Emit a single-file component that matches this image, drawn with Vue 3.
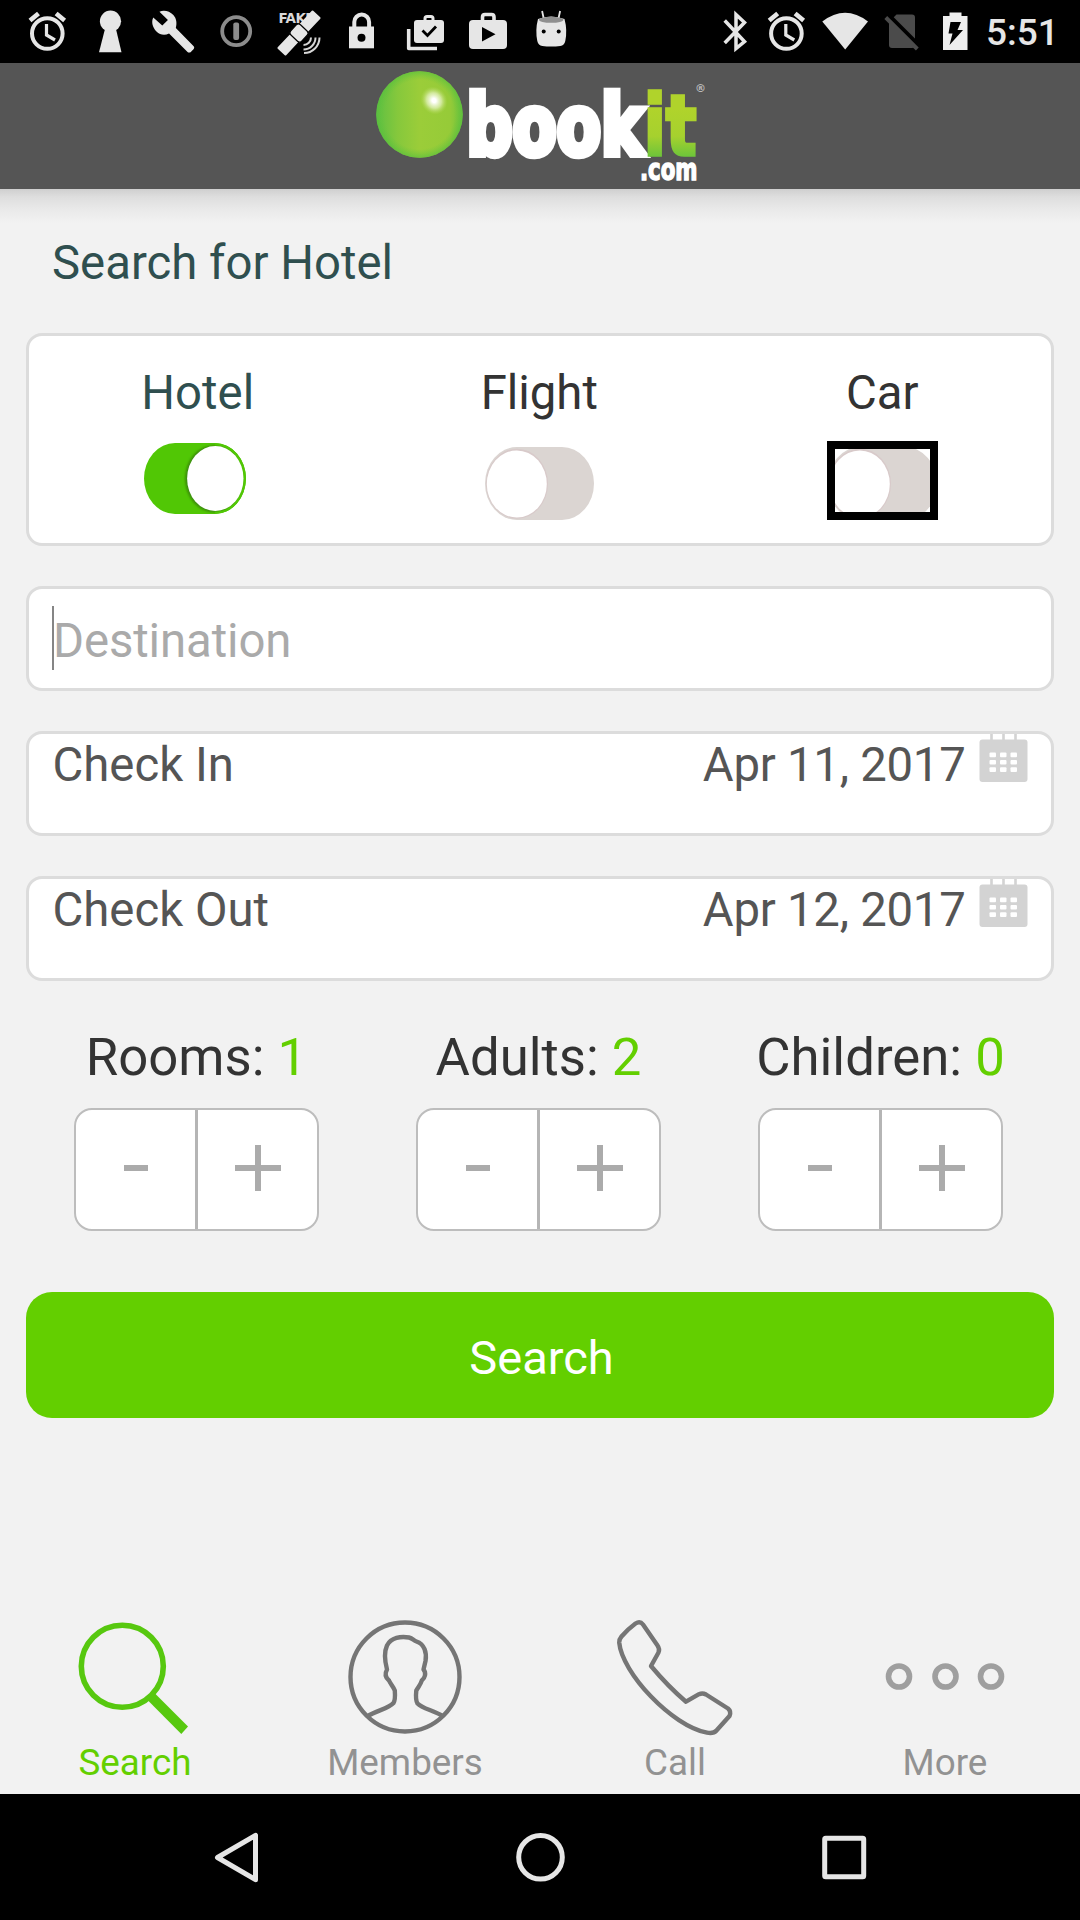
<script setup>
import { ref } from 'vue'

const modes = ref([
  { name: 'Hotel', on: true, focused: false },
  { name: 'Flight', on: false, focused: false },
  { name: 'Car', on: false, focused: true },
])
const dates = [
  { label: 'Check In', value: 'Apr 11, 2017' },
  { label: 'Check Out', value: 'Apr 12, 2017' },
]
const counters = ref([
  { label: 'Rooms', count: 1 },
  { label: 'Adults', count: 2 },
  { label: 'Children', count: 0 },
])
const holes = [0, 1, 2].flatMap((r) => [0, 1, 2].map((c) => ({ x: 10.5 + c * 10.5, y: 18.5 + r * 7.4 })))
</script>

<template>
  <div class="screen">
    <div class="status">
      <div class="status-left">
        <svg class="cell" viewBox="16 0 63 63">
          <g fill="none" stroke="#e6e6e6"><circle cx="47.3" cy="33.5" r="15.3" stroke-width="4" /><path d="M46.5 24v11l8.5 5" stroke-width="3.2" /><path d="M30 20.5l8.5-7M64.6 20.5l-8.5-7" stroke-width="4.6" /></g>
        </svg>
        <svg class="cell" viewBox="79 0 63 63"><g fill="#e6e6e6"><circle cx="110.5" cy="21.2" r="10.6" /><path d="M105.500 27h10l6 25.300h-22.500z" /></g></svg>
        <svg class="cell" viewBox="142 0 63 63"><path transform="translate(151 8.700) scale(1.880)" fill="#e6e6e6" d="M22.700 20l-9.500-9.800c.7-2.500.4-5-1.300-6.900-2-2-5-2.800-7.400-1.700L9 6 6 9 1.200 4.700C0 7.100.9 10.100 2.900 12.100c1.900 1.900 4.400 2.200 6.700 1.100l9.700 9.700c.6.6 1.400.6 2 0l1.300-1.300c.5-.5.5-1.100.1-1.600z" /></svg>
        <svg class="cell" viewBox="205 0 63 63"><circle cx="236.200" cy="31.200" r="14" fill="none" stroke="#8c8c8c" stroke-width="3.800" /><rect x="233.300" y="22.500" width="5.800" height="17.500" rx="2" fill="#8c8c8c" /></svg>
        <svg class="cell" viewBox="268 0 63 63">
          <text x="278.500" y="23" font-size="13.500" font-weight="700" fill="#d8d8d8" textLength="36" class="fake">FAKE</text>
          <g transform="translate(299 33) rotate(-47)" fill="#e6e6e6"><rect x="5" y="-5.800" width="21" height="11.600" rx="1" /><rect x="-26" y="-5.800" width="19" height="11.600" rx="1" /><rect x="-7" y="-7.500" width="14" height="15" rx="3" stroke="#000" stroke-width="1.200" /></g>
          <path d="M311 37.500a7.500 7.500 0 0 1-7.500 7.500M315.500 37.500a12 12 0 0 1-12 12M319.500 37.500a15.500 15.500 0 0 1-15.500 15.500" fill="none" stroke="#d6d6d6" stroke-width="2" />
        </svg>
        <svg class="cell" viewBox="331 0 63 63"><path d="M354.300 28v-6a7.400 7.400 0 0 1 14.800 0v6" fill="none" stroke="#e6e6e6" stroke-width="4" /><rect x="349" y="26.500" width="25" height="21.800" fill="#e6e6e6" /><circle cx="361.500" cy="37.700" r="4" fill="#000" /></svg>
        <svg class="cell" viewBox="394 0 63 63"><path d="M408.700 29v19.500H437" fill="none" stroke="#e6e6e6" stroke-width="3.600" stroke-linejoin="round" /><path d="M425 21v-2.500q0-2 2-2h4q2 0 2 2V21" fill="none" stroke="#e6e6e6" stroke-width="3" /><rect x="414" y="20" width="30" height="23" rx="3" fill="#e6e6e6" /><path d="M422.500 30.500l5 5 8.500-9" fill="none" stroke="#000" stroke-width="2.800" /></svg>
        <svg class="cell" viewBox="457 0 63 63"><path d="M482.500 21v-4q0-2.500 2.500-2.500h6.500q2.500 0 2.500 2.500v4" fill="none" stroke="#e6e6e6" stroke-width="3.600" /><rect x="469" y="20" width="38" height="29" rx="4" fill="#e6e6e6" /><path d="M482 27l13.500 7.200L482 41.500z" fill="#000" /></svg>
        <svg class="cell" viewBox="520 0 63 63"><path d="M543.600 18l-1.500-7M558.600 18l1.500-7" stroke="#e6e6e6" stroke-width="1.800" /><path d="M538 19q13-5 26.500 0 3 11 .8 22-1 4.500-5 5-9.300 1.200-18 0-4-.5-5-5-2.200-11 .7-22z" fill="#e6e6e6" /><ellipse cx="551.200" cy="19.800" rx="12.300" ry="3" fill="#8f8f8f" /><circle cx="543.700" cy="31.500" r="2" fill="#000" /><circle cx="558.700" cy="31.500" r="2" fill="#000" /></svg>
      </div>
      <div class="status-right">
        <svg width="48" height="63" viewBox="712 0 48 63"><path d="M724.700 20.500L744.500 41.500l-8.500 7v-34l8.500 8-19.800 20.500" fill="none" stroke="#e6e6e6" stroke-width="3.500" /></svg>
        <svg width="54" height="63" viewBox="760 0 54 63"><g fill="none" stroke="#e6e6e6"><circle cx="786.400" cy="33.500" r="15.300" stroke-width="4" /><path d="M785.800 24v11l8.500 5" stroke-width="3.200" /><path d="M769.200 20.500l8.500-7M803.600 20.500l-8.500-7" stroke-width="4.600" /></g></svg>
        <svg width="61" height="63" viewBox="814 0 61 63"><path d="M822.300 21.500q22.800-17.500 45.700 0L845.200 49.500z" fill="#e6e6e6" /></svg>
        <svg width="55" height="63" viewBox="875 0 55 63"><path d="M889 22l7.500-7.500H912q3 0 3 3V45q0 3-3 3h-20q-3 0-3-3z" fill="#4b4b4b" /><path d="M888.500 15l32 32" stroke="#000" stroke-width="4" /><path d="M885.800 17.500l31.500 31.500" stroke="#4b4b4b" stroke-width="4" /></svg>
        <svg width="50" height="63" viewBox="930 0 50 63"><path d="M943 16h6.500v-3.500h12V16h6v34H943z" fill="#eee" /><path d="M950.500 22h10.500l-3.500 8h5.500L949.500 45l3-11.500H948.500z" fill="#000" /></svg>
        <span class="clock">5:51</span>
      </div>
    </div>

    <header class="header">
      <svg width="1080" height="126" viewBox="0 63 1080 126">
        <defs>
          <linearGradient id="ball"><stop offset="0" stop-color="#5fc043" /><stop offset=".25" stop-color="#86c83c" /><stop offset=".5" stop-color="#9bcd39" /><stop offset=".85" stop-color="#96cb38" /><stop offset="1" stop-color="#6fc33d" /></linearGradient>
          <radialGradient id="rim"><stop offset=".8" stop-color="#63c33c" stop-opacity="0" /><stop offset="1" stop-color="#57bf3d" stop-opacity=".7" /></radialGradient>
          <radialGradient id="shine"><stop offset=".15" stop-color="#fff" /><stop offset=".55" stop-color="#e4f2bd" stop-opacity=".75" /><stop offset="1" stop-color="#b9dc5e" stop-opacity="0" /></radialGradient>
          <linearGradient id="lime" gradientUnits="userSpaceOnUse" x1="0" y1="88" x2="0" y2="157"><stop offset=".3" stop-color="#b0d32b" /><stop offset=".7" stop-color="#a6d12e" /><stop offset="1" stop-color="#6cc43a" /></linearGradient>
        </defs>
        <circle cx="419.500" cy="114.500" r="43.300" fill="url(#ball)" />
        <circle cx="419.500" cy="114.500" r="43.300" fill="url(#rim)" />
        <ellipse cx="434" cy="100.500" rx="13" ry="14.500" transform="rotate(-35 434 100.500)" fill="url(#shine)" />
        <g class="logo">
          <text x="466.500" y="154.500" font-size="84" fill="#fff" stroke="#fff" stroke-width="6.500" textLength="230" lengthAdjust="spacingAndGlyphs">book<tspan fill="url(#lime)" stroke="url(#lime)" stroke-width="3.500">it</tspan></text>
          <text x="640" y="180" font-size="30.500" fill="#fff" stroke="#fff" stroke-width="1.400" textLength="57.500" lengthAdjust="spacingAndGlyphs">.com</text>
        </g>
        <text x="695" y="92" font-size="11" font-weight="700" fill="#bbb" class="fake">®</text>
      </svg>
    </header>

    <main class="main">
      <h1 class="title">Search for Hotel</h1>

      <section class="card modes">
        <div v-for="m in modes" :key="m.name" class="mode" :class="{ active: m.on }">
          <span>{{ m.name }}</span>
          <div class="toggle-slot" :class="{ focused: m.focused }">
            <svg v-if="m.on" width="102" height="71" viewBox="0 0 102 71" class="on">
              <defs><clipPath id="track"><path d="M31 0h40a31 35.500 0 0 1 0 71H31a31 35.500 0 0 1 0-71z" /></clipPath><filter id="soft" x="-20%" y="-20%" width="140%" height="140%"><feGaussianBlur stdDeviation="1.300" /></filter></defs>
              <g clip-path="url(#track)"><rect width="102" height="71" fill="#51c705" /><ellipse cx="70" cy="35.800" rx="29" ry="33.500" fill="#3b8d08" filter="url(#soft)" /><path d="M71 1a30 34.500 0 0 1 0 69" fill="none" stroke="#51c705" stroke-width="2.500" /></g>
              <ellipse cx="71.300" cy="35.500" rx="28.200" ry="32.500" fill="#fff" />
            </svg>
            <svg v-else width="109" height="73" viewBox="0 0 109 73">
              <path d="M32 0h45a32 36.500 0 0 1 0 73H32a32 36.500 0 0 1 0-73z" fill="#dbd5d2" />
              <ellipse cx="32" cy="36.700" rx="31" ry="35" fill="#d8caca" />
              <ellipse cx="31.800" cy="37" rx="30" ry="33.500" fill="#fff" />
            </svg>
          </div>
        </div>
      </section>

      <div class="card field destination"><i class="caret"></i><span>Destination</span></div>

      <div v-for="d in dates" :key="d.label" class="card field date">
        <span>{{ d.label }}</span>
        <span class="value">{{ d.value }}</span>
        <svg width="49" height="49" viewBox="0 0 49 49">
          <path d="M12.500 0v7M24.500 0v7M36.500 0v7" stroke="#d3d3d3" stroke-width="2.600" />
          <rect x=".5" y="5.500" width="48" height="42.500" rx="3" fill="#d3d3d3" />
          <rect v-for="h in holes" :key="`${h.x}-${h.y}`" :x="h.x" :y="h.y" width="6.500" height="4.700" rx="1" fill="#fff" />
        </svg>
      </div>

      <section class="counters">
        <div v-for="c in counters" :key="c.label" class="counter">
          <div class="count-label">{{ c.label }}: <b>{{ c.count }}</b></div>
          <div class="stepper">
            <div class="step"><svg width="24" height="6"><rect width="24" height="6" fill="#ababab" /></svg></div>
            <div class="step plus"><svg width="46" height="46"><path d="M0 23h46M23 0v46" stroke="#ababab" stroke-width="6" /></svg></div>
          </div>
        </div>
      </section>

      <div class="search-button">Search</div>
    </main>

    <nav class="tabs">
      <div class="tab active">
        <svg width="120" height="120" viewBox="75 1616 120 120"><circle cx="122.300" cy="1665.300" r="41" fill="none" stroke="#57c80f" stroke-width="5.600" /><path d="M147.500 1699L181.300 1733 188 1725.500 155 1692.500z" fill="#57c80f" /></svg>
        <span>Search</span>
      </div>
      <div class="tab">
        <svg width="120" height="120" viewBox="345 1617 120 120"><g fill="none" stroke="#757575" stroke-width="4.400" stroke-linejoin="round"><circle cx="405" cy="1677" r="54.500" /><path d="M367 1716.500C377 1710 388 1709 393.500 1703Q395.500 1700 394.800 1690.500C393.500 1687 390.500 1684 389 1680.500C386 1678 384.500 1674 387 1669.500C384.500 1660 384.500 1651 387 1645.500C391 1637.500 401 1636 409 1637.500C413 1638.500 413.500 1640.500 416.500 1641.500C424.500 1644 427 1653 425.500 1661L423.500 1669.500C426.500 1673 425 1678 421.800 1680.500C420.500 1685 418 1687 416.300 1690.500Q415.300 1700 417.500 1703.500C423 1709 433 1710 443.500 1716.500" /></g></svg>
        <span>Members</span>
      </div>
      <div class="tab">
        <svg width="120" height="120" viewBox="615 1617 120 120"><path d="M635.500 1623.500Q640 1620.500 643 1624.500L657.500 1645.500Q660 1649 658.500 1652.500L651 1666C661 1678 674 1691.500 686 1701.700L699 1694.200Q702.500 1692.500 706 1694.500L728 1708.500Q731.500 1711.500 729.500 1716L716.500 1730.500Q713.500 1734 707 1732.700C672 1726 622 1673 619.200 1642.500Q619 1639.500 621.500 1636.500Q628 1629 635.500 1623.500Z" fill="none" stroke="#757575" stroke-width="4.400" stroke-linejoin="round" /></svg>
        <span>Call</span>
      </div>
      <div class="tab">
        <svg width="120" height="120" viewBox="885 1617 120 120"><g fill="none" stroke="#9f9f9f" stroke-width="5.600"><circle cx="899" cy="1676.500" r="10.500" /><circle cx="945.500" cy="1676.500" r="10.500" /><circle cx="991" cy="1676.500" r="10.500" /></g></svg>
        <span>More</span>
      </div>
    </nav>

    <div class="system-nav">
      <svg width="60" height="60" viewBox="207 1827 60 60"><path d="M255.500 1835.300v44.400L217.500 1857.500z" fill="none" stroke="#e6e6e6" stroke-width="5" stroke-linejoin="round" /></svg>
      <svg width="60" height="60" viewBox="510.800 1827 60 60"><circle cx="540.300" cy="1857.300" r="21.800" fill="none" stroke="#e6e6e6" stroke-width="5" /></svg>
      <svg width="60" height="60" viewBox="814 1827 60 60"><rect x="824.700" y="1838.300" width="39" height="38.500" rx="1" fill="none" stroke="#e6e6e6" stroke-width="5" /></svg>
    </div>
  </div>
</template>

<style>
body { margin: 0; background: #f2f2f2; }
</style>

<style scoped>
.screen { width: 1080px; height: 1920px; display: flex; flex-direction: column; overflow: hidden; background: #f2f2f2; font-family: Roboto, "Liberation Sans", sans-serif; }
svg { display: block; flex: none; }
.status { height: 63px; flex: none; background: #000; display: flex; justify-content: space-between; }
.status-left { display: flex; padding-left: 16px; }
.cell { width: 63px; height: 63px; }
.status-right { display: flex; width: 368px; }
.clock { font-size: 37px; font-weight: 500; line-height: 66px; color: #e6e6e6; margin-left: 6px; white-space: nowrap; }
.fake { font-family: "DejaVu Sans", sans-serif; }
.header { height: 126px; flex: none; background: #555; }
.logo { font-family: "DejaVu Sans Condensed", "DejaVu Sans", sans-serif; font-weight: 700; }
.main { flex: 1; padding: 0 26px; background: linear-gradient(#cfcfcf 0, #dedede 8px, #e9e9e9 20px, #f2f2f2 34px); }
.title { margin: 0; padding: 44px 0 0 26px; height: 100px; font-size: 47.300px; line-height: 60px; font-weight: 400; color: #2f4f4f; }
.card { box-sizing: border-box; margin: 0; width: 1027.500px; background: #fff; border: 3px solid #dcdcdc; border-radius: 16px; font-size: 47.300px; line-height: 60px; }
.modes { height: 213px; display: flex; padding: 27px 0 0; }
.mode { width: 342.500px; display: flex; flex: none; flex-direction: column; align-items: center; color: #333; }
.mode.active { color: #2f4f4f; }
.mode:first-child { margin: 0 -1px 0 -2.500px; }
.mode:last-child { margin-left: .5px; }
.toggle-slot { box-sizing: border-box; width: 111px; height: 79px; margin-top: 18px; display: flex; align-items: center; justify-content: center; padding-top: 5px; }
.toggle-slot svg.on { margin: -9px 5px 0 0; }
.focused { border: 8px solid #000; overflow: hidden; }
.field { height: 105px; margin-top: 40px; padding: 0 23px 0 23.500px; display: flex; }
.destination { color: #aaa; padding-top: 22px; }
.caret { width: 2px; height: 64px; background: #858585; margin: -5px -1px 0 -.5px; }
.destination span { letter-spacing: -.1px; }
.date { color: #555; }
.date .value { margin-left: auto; margin-right: 13px; letter-spacing: -.25px; }
.date span { padding-top: 1px; }
.counters { display: flex; margin: 46px 0 0 -1px; }
.counter { width: 342px; display: flex; flex-direction: column; align-items: center; }
.count-label { font-size: 52.700px; line-height: 60px; color: #333; white-space: nowrap; padding-left: 1px; }
.count-label b { font-weight: 400; color: #63cf00; }
.stepper { box-sizing: border-box; width: 245px; height: 123px; margin-top: 21px; border: 2px solid #bdbdbd; border-radius: 18px; background: #fff; display: flex; }
.step { flex: 1; display: flex; align-items: center; justify-content: center; }
.step svg { margin: -3px 0 0 1px; }
.step.plus { border-left: 3px solid #b5b5b5; }
.search-button { box-sizing: border-box; height: 126px; margin-top: 61px; padding: 6px 0 0 3px; border-radius: 26px; background: #63cf00; color: #fff; font-size: 47px; line-height: 120px; text-align: center; }
.tabs { height: 177px; flex: none; display: flex; }
.tab { width: 270px; display: flex; flex-direction: column; align-items: center; font-size: 36.800px; line-height: 44px; color: #929292; }
.tab span { margin-top: 4px; }
.tab.active { color: #63cf00; }
.system-nav { height: 126px; flex: none; background: #000; display: flex; align-items: center; justify-content: space-between; padding: 0 206px 0 207px; }
</style>
